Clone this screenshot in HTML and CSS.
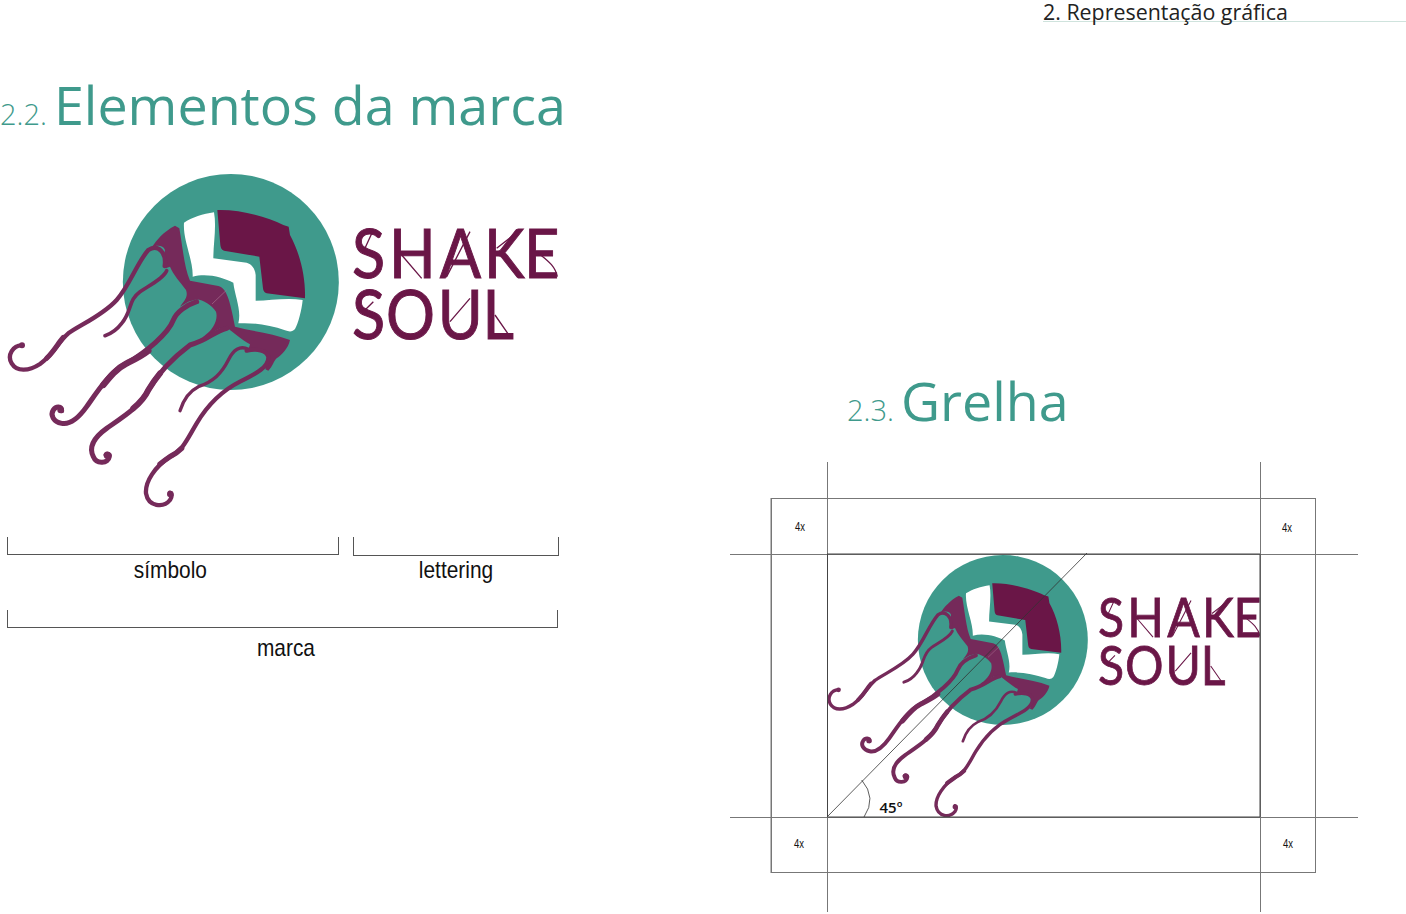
FILE: index.html
```html
<!DOCTYPE html>
<html lang="pt">
<head>
    <meta charset="UTF-8">
    <meta name="viewport" content="width=device-width, initial-scale=1.0">
    <title>2. Representação gráfica</title>
    <link rel="stylesheet" href="styles.css">
</head>
<body>
    <!-- jellyfish symbol, used by both logos -->
    <svg class="defs" width="0" height="0" aria-hidden="true">
        <defs>
            <g id="jelly">
                <circle cx="692.5" cy="366" r="324" fill="#3f9a8c"/>
                <path fill="#fff" d="M552,188 C575,172 610,162 642,157 C650,200 640,250 640,295 L740,308 C755,312 765,325 767,345 L767,422 C810,422 860,412 908,420 C905,450 895,490 885,507 C878,516 868,516 855,511 C810,495 760,487 715,490 C725,450 705,410 700,368 C670,352 620,338 578,350 C580,300 548,240 552,188 Z"/>
                <path fill="#6a1647" d="M652,150 C720,148 800,170 850,195 L866,200 L870,225 C900,280 917,350 915,415 L800,400 C792,398 790,392 789,385 L778,290 L672,272 C664,270 662,262 661,255 Z"/>
                <path fill="#752a5a" d="M525,197 L538,205 C548,260 552,320 570,362 L655,378 C680,385 690,420 705,500 C760,515 820,520 870,540 C865,565 845,585 830,595 C820,605 818,620 805,632 L796,628 L806,590 C800,570 770,565 745,570 L750,553 C725,540 700,515 680,503 C660,500 640,515 625,530 L600,545 L610,530 C640,510 655,480 648,455 C635,435 610,420 590,418 L565,425 L540,440 C555,420 565,410 558,390 C540,365 520,345 510,320 L497,325 L490,300 L495,270 C490,255 470,255 455,262 C470,240 490,215 525,197 Z"/>
                <g fill="none" stroke="#752a5a" stroke-linecap="round">
                    <path stroke-width="13" d="M494,318 C500,280 475,250 445,270 C410,310 390,375 350,420 C310,465 240,495 205,520 C170,550 170,575 120,612 C85,635 50,635 35,610 C20,585 40,555 66,556"/>
                    <path stroke-width="11" d="M500,332 C490,355 450,375 420,395 C385,420 395,455 365,490 C350,510 330,522 315,527"/>
                    <path stroke-width="15" d="M590,425 C560,435 530,455 520,480 C505,520 440,575 380,610 C330,635 295,690 260,740 C235,775 210,795 185,790 C160,785 150,765 160,750 C168,738 185,738 185,752"/>
                    <path stroke-width="15" d="M680,505 C640,515 625,540 570,555 C530,585 480,630 445,690 C420,740 370,770 320,805 C285,830 265,860 280,890 C290,915 325,910 328,890 C330,882 322,880 318,884"/>
                    <path stroke-width="10" d="M745,568 C720,555 700,570 685,600 C665,640 640,665 595,680 C565,695 550,720 540,752"/>
                    <path stroke-width="13" d="M740,572 C770,565 800,570 805,590 C808,620 770,640 720,665 C660,695 620,740 590,790 C560,840 550,870 510,890 C465,920 435,965 438,1000 C445,1040 490,1045 510,1020 C518,1008 515,1000 510,998"/>
                    <!-- wider stretches of the tentacles -->
                    <path stroke-width="19" d="M445,572 C425,588 400,600 380,610 C350,625 330,650 310,675"/>
                    <path stroke-width="18" d="M480,640 C462,662 452,678 445,690 C435,712 420,728 400,745"/>
                    <path stroke-width="16" d="M545,865 C535,875 525,882 510,890 C500,897 490,904 480,912"/>
                    <path stroke-width="15" d="M190,532 C175,548 165,570 140,595"/>
                </g>
                <g fill="#752a5a">
                    <circle cx="66" cy="556" r="9"/>
                    <circle cx="182" cy="750" r="10"/>
                    <circle cx="322" cy="886" r="11"/>
                    <circle cx="511" cy="1002" r="10"/>
                </g>
                <path stroke="#a8708f" stroke-width="2" d="M636,432 L680,390"/>
            </g>
            <!-- thin accents that cross the lettering -->
            <path id="accents" transform="translate(0 165)" fill="none" stroke="#6a1647" stroke-width="4" d="M1120,45 L1090,110 M1205,120 L1265,190 M1410,50 L1340,185 M1560,45 L1490,100 M1610,110 C1640,135 1665,150 1672,185 M1120,260 L1095,285 M1410,250 L1350,320 M1485,300 L1530,365"/>
        </defs>
    </svg>

    <div class="page">
        <header class="running-head">2. Representação gráfica</header>

        <div class="columns">
            <section class="col-left">
                <h2 class="section-title"><span class="section-num">2.2.</span>Elementos da marca</h2>

                <svg class="logo" viewBox="0 0 1710 1080" role="img" aria-label="Shake Soul">
                    <use href="#jelly"/>
                    <g transform="scale(0.9 1)">
                        <text class="wordmark" x="1173 1297 1466 1613 1747" y="354">SHAKE</text>
                        <text class="wordmark" x="1173 1287 1459 1608" y="536">SOUL</text>
                    </g>
                    <use href="#accents"/>
                </svg>

                <div class="brackets">
                    <div class="bracket-item bracket-simbolo">
                        <div class="bracket"></div>
                        <p class="bracket-label">símbolo</p>
                    </div>
                    <div class="bracket-item bracket-lettering">
                        <div class="bracket"></div>
                        <p class="bracket-label">lettering</p>
                    </div>
                </div>
                <div class="bracket-item bracket-marca">
                    <div class="bracket"></div>
                    <p class="bracket-label">marca</p>
                </div>
            </section>

            <section class="col-right">
                <h2 class="section-title section-title-right"><span class="section-num">2.3.</span>Grelha</h2>

                <svg class="grid-drawing" viewBox="730 462 629 451" role="img" aria-label="Grelha de construção">
                    <g transform="translate(821.2 544) scale(0.2623)">
                        <use href="#jelly"/>
                        <g transform="scale(0.9 1)">
                            <text class="wordmark" x="1173 1297 1466 1613 1747" y="354">SHAKE</text>
                            <text class="wordmark" x="1173 1287 1459 1608" y="536">SOUL</text>
                        </g>
                        <use href="#accents"/>
                    </g>
                    <g class="grid-lines">
                        <path class="grid-soft" d="M771,498 V873"/>
                        <rect x="771.5" y="498.5" width="544" height="374"/>
                        <path d="M827.5,462 V912 M1260.5,462 V912 M730,554.5 H1358 M730,817.5 H1358"/>
                        <path class="grid-dark" d="M827.5,554 V817 H1260 V554 H827"/>
                        <path class="grid-thin" d="M827.5,816.5 L1087,553 M861.7,780 Q877,798 864,817"/>
                    </g>
                    <text class="grid-x" x="795" y="531" textLength="10" lengthAdjust="spacingAndGlyphs">4x</text>
                    <text class="grid-x" x="1282" y="532" textLength="10" lengthAdjust="spacingAndGlyphs">4x</text>
                    <text class="grid-x" x="794" y="848" textLength="10" lengthAdjust="spacingAndGlyphs">4x</text>
                    <text class="grid-x" x="1283" y="848" textLength="10" lengthAdjust="spacingAndGlyphs">4x</text>
                    <text class="grid-angle" x="879.5" y="813">45º</text>
                </svg>
            </section>
        </div>
    </div>
</body>
</html>
```

FILE: styles.css
```css
html, body {
    margin: 0;
    background-color: #fff;
}
.defs {
    display: block;
    height: 0;
}
.page {
    width: 1406px;
    height: 914px;
    overflow: hidden;
    font-family: "Open Sans", "Noto Sans", sans-serif;
}
.running-head {
    margin-left: 1043px;
    height: 21px;
    border-bottom: 1px solid #cfe3dd;
    font-size: 21.4px;
    line-height: 23px;
    color: #222;
}
.columns {
    display: flex;
}
.col-left {
    width: 730px;
    flex: none;
}
.col-right {
    width: 676px;
    flex: none;
}
.section-title {
    margin: 0;
    height: 138px;
    padding-top: 47px;
    box-sizing: border-box;
    font-size: 53.8px;
    line-height: 70px;
    font-weight: 400;
    color: #3f9a8c;
    white-space: nowrap;
}
.section-title-right {
    height: 440px;
    padding: 343px 0 0 117px;
}
.section-num {
    margin-right: 7px;
    font-size: 29px;
    font-weight: 300;
}
.logo {
    display: block;
    width: 570px;
    height: 360px;
}
.wordmark {
    font-family: "Lato", "Open Sans", sans-serif;
    font-size: 204px;
    fill: #6a1647;
    stroke: #6a1647;
    stroke-width: 3;
}
.brackets {
    display: flex;
    margin-top: 17px;
}
.bracket-item {
    flex: none;
}
.bracket {
    height: 17px;
    border: 1px solid #555;
    border-top: none;
}
.bracket-label {
    margin: 0;
    font-family: "Liberation Sans", Arial, sans-serif;
    font-size: 24px;
    line-height: 30px;
    text-align: center;
    color: #111;
    transform: scaleX(0.87);
}
.bracket-simbolo {
    width: 332px;
    margin-left: 7px;
}
.bracket-simbolo .bracket-label {
    padding-right: 6px;
}
.bracket-lettering {
    width: 206px;
    margin-left: 14px;
}
.bracket-lettering .bracket {
    height: 18px;
}
.bracket-lettering .bracket-label {
    margin-top: -1px;
}
.bracket-marca {
    width: 551px;
    margin: 25px 0 0 7px;
}
.bracket-marca .bracket-label {
    padding: 5px 0 0 8px;
}
.grid-drawing {
    display: block;
    width: 629px;
    height: 451px;
}
.grid-lines {
    fill: none;
    stroke: #777;
    stroke-width: 1;
}
.grid-soft {
    stroke: #bbb;
    stroke-width: 2;
}
.grid-dark {
    stroke: #444;
}
.grid-thin {
    stroke: #333;
    stroke-width: 0.8;
}
.grid-x {
    font-family: "Liberation Sans", sans-serif;
    font-size: 13px;
    fill: #111;
}
.grid-angle {
    font-family: "Open Sans", sans-serif;
    font-size: 15px;
    font-weight: 600;
    fill: #111;
}
```
